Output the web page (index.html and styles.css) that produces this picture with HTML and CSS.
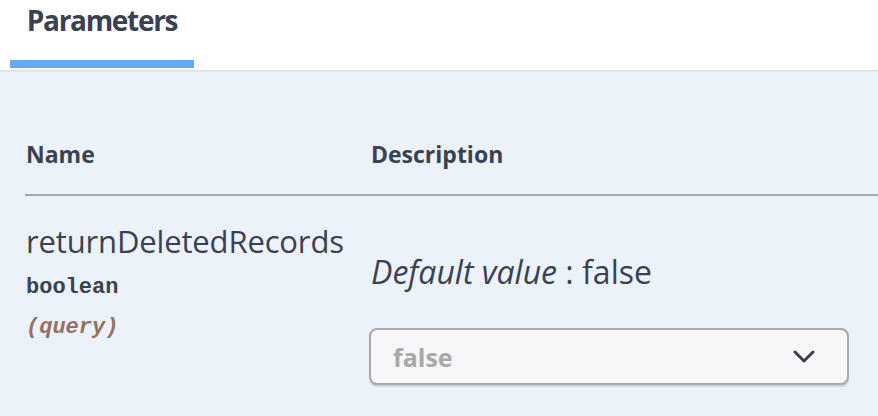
FILE: index.html
```html
<!DOCTYPE html>
<html>
<head>
<meta charset="utf-8">
<link rel="stylesheet" href="styles.css">
</head>
<body>
<div class="section-header">
  <div class="tab">
    <h4 class="tab-title">Parameters</h4>
    <div class="tab-bar"></div>
  </div>
</div>
<div class="section-body">
  <div class="params">
    <div class="thead">
      <div class="th th-name">Name</div>
      <div class="th th-desc">Description</div>
    </div>
    <div class="row">
      <div class="col-name">
        <div class="param-name">returnDeletedRecords</div>
        <div class="param-type">boolean</div>
        <div class="param-in">(query)</div>
      </div>
      <div class="col-desc">
        <div class="default"><i>Default value</i> : false</div>
        <div class="select">
          <span class="select-value">false</span>
          <svg class="chevron" width="22" height="14" viewBox="0 0 22 14"><path d="M2 2 L11 11 L20 2" fill="none" stroke="#3b4151" stroke-width="3" stroke-linecap="round" stroke-linejoin="round"/></svg>
        </div>
      </div>
    </div>
  </div>
</div>
</body>
</html>
```

FILE: styles.css
```css
html, body {
  margin: 0;
  padding: 0;
}
body {
  width: 878px;
  height: 416px;
  overflow: hidden;
  background: #ebf2fa;
  font-family: "Open Sans", "Noto Sans", sans-serif;
  color: #3b4151;
}
.section-header {
  height: 70px;
  background: #ffffff;
  box-shadow: 0 1px 2px rgba(0, 0, 0, 0.12);
  padding-left: 10px;
  position: relative;
}
.tab {
  width: 184px;
  height: 68px;
  display: flex;
  flex-direction: column;
  justify-content: space-between;
}
.tab-title {
  margin: 0;
  padding-top: 1px;
  font-size: 28px;
  line-height: 38px;
  font-weight: 700;
  text-align: center;
  letter-spacing: -1.3px;
}
.tab-bar {
  height: 8px;
  background: #63aaf0;
}
.section-body {
  padding-top: 68px;
  height: 346px;
  box-sizing: border-box;
}
.params {
  margin-left: 25px;
}
.thead {
  display: flex;
  border-bottom: 2px solid #a9a9ab;
  padding-bottom: 24px;
}
.th {
  font-size: 23px;
  line-height: 32px;
  font-weight: 700;
}
.th-name {
  width: 345px;
  padding-left: 1px;
}
.row {
  display: flex;
  padding-top: 26px;
}
.col-name {
  width: 345px;
  padding-left: 1px;
}
.param-name {
  font-size: 31px;
  line-height: 38px;
  letter-spacing: -0.15px;
}
.param-type {
  font-family: "Liberation Mono", "DejaVu Sans Mono", monospace;
  font-weight: 700;
  font-size: 22px;
  line-height: 30px;
  margin-top: 13px;
}
.param-in {
  font-family: "Liberation Mono", "DejaVu Sans Mono", monospace;
  font-style: italic;
  font-weight: 700;
  font-size: 22px;
  line-height: 30px;
  margin-top: 10px;
  color: #98705f;
}
.col-desc {
  padding-top: 30px;
}
.default {
  font-size: 32px;
  line-height: 40px;
  letter-spacing: 0;
}
.select {
  margin-top: 36px;
  width: 422px;
  height: 53px;
  border: 2px solid #a9a9ac;
  border-radius: 8px;
  background: #f7f7fa;
  box-shadow: 0 2px 1px rgba(0, 0, 0, 0.12);
  display: flex;
  align-items: center;
  justify-content: space-between;
  padding: 0 32px 0 22px;
  margin-left: -2px;
}
.select-value {
  font-size: 25px;
  font-weight: 700;
  color: #a9a9ab;
}
.chevron {
  display: block;
}
```
